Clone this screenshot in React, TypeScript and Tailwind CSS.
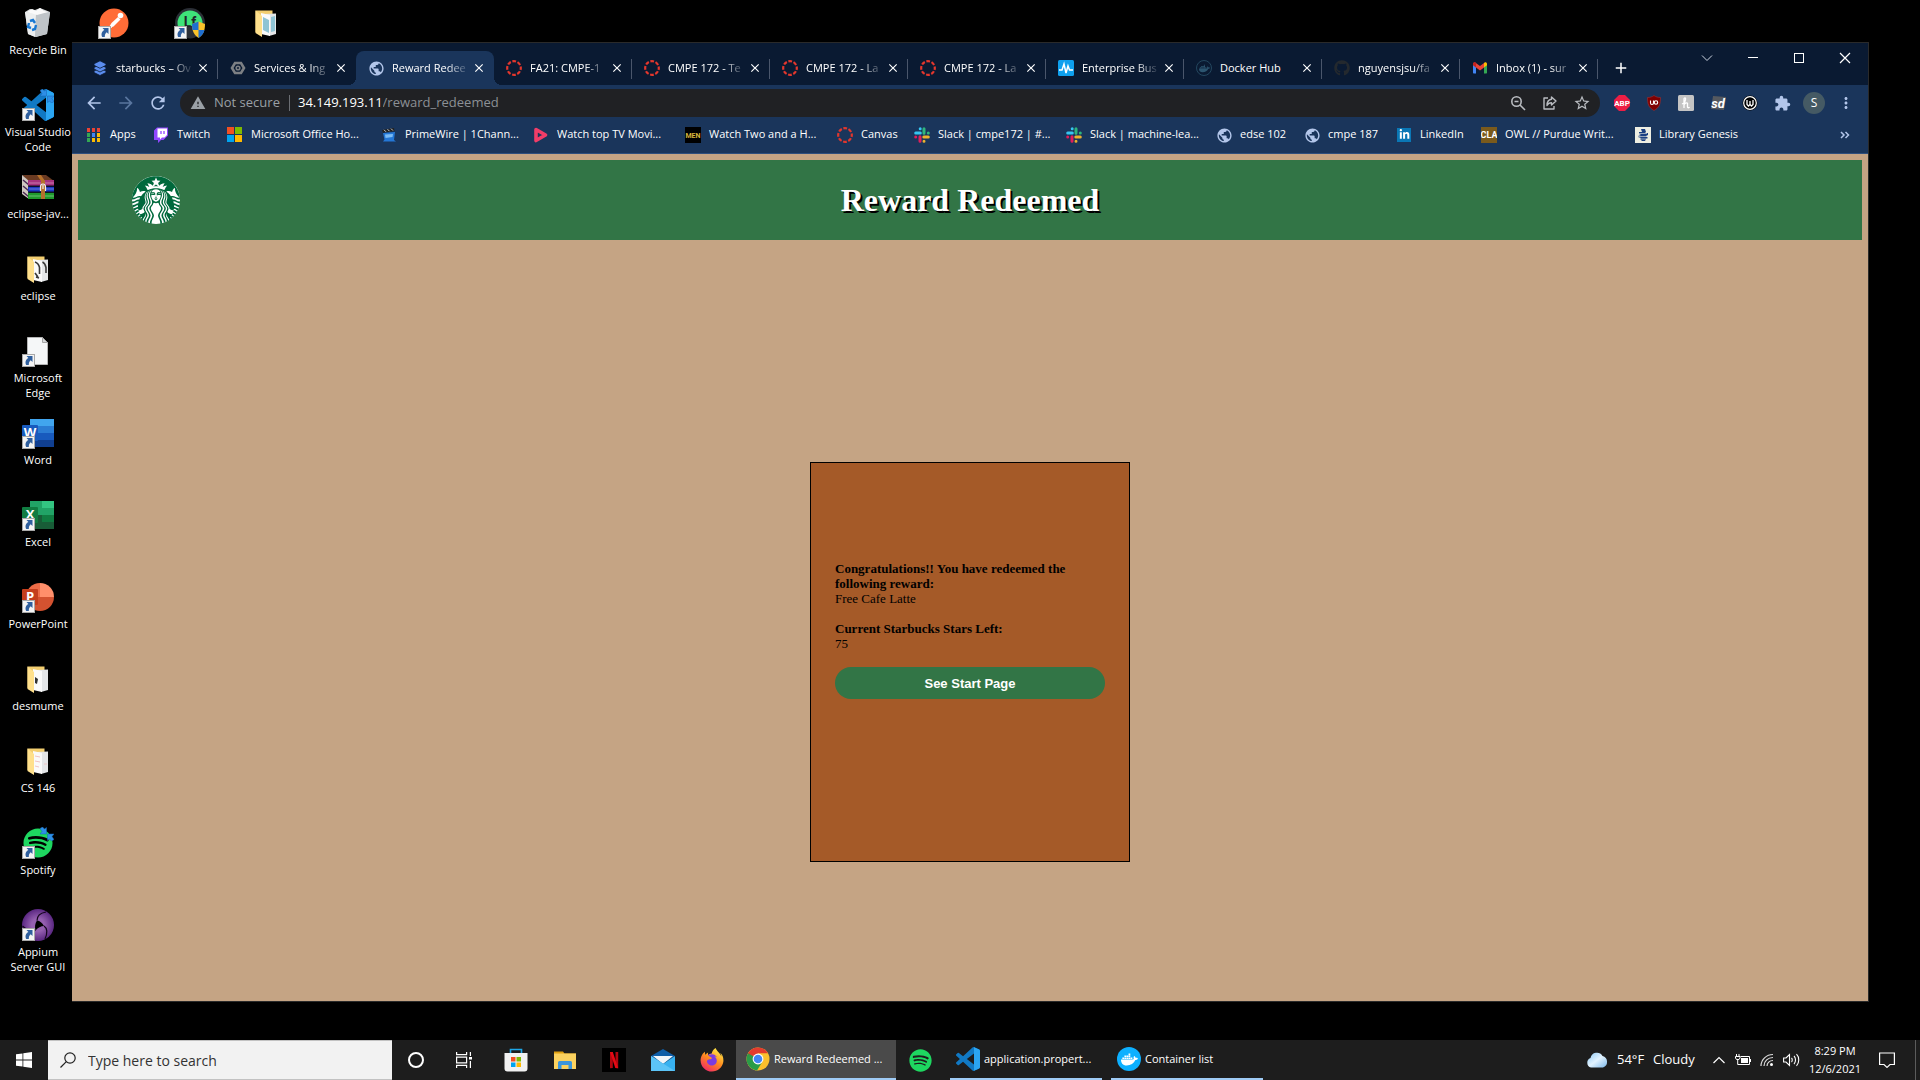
import type { ReactNode } from "react";
import { FaGithub, FaDocker, FaSpotify, FaLinkedinIn, FaFirefoxBrowser } from "react-icons/fa";
import {
  MdArrowBack,
  MdArrowForward,
  MdRefresh,
  MdWarning,
  MdExtension,
  MdMoreVert,
  MdPublic,
  MdStarBorder,
  MdClose,
  MdAdd,
} from "react-icons/md";
import { SiStarbucks } from "react-icons/si";

const VSCODE_PATH =
  "M23.15 2.587L18.21.21a1.494 1.494 0 0 0-1.705.29l-9.46 8.63-4.12-3.128a.999.999 0 0 0-1.276.057L.327 7.261A1 1 0 0 0 .326 8.74L3.899 12 .326 15.26a1 1 0 0 0 .001 1.479L1.65 17.94a.999.999 0 0 0 1.276.057l4.12-3.128 9.46 8.63a1.492 1.492 0 0 0 1.704.29l4.942-2.377A1.5 1.5 0 0 0 24 20.06V3.939a1.5 1.5 0 0 0-.85-1.352zm-5.146 14.861L10.826 12l7.178-5.448v10.896z";

/* ---------- desktop icons ---------- */

function ShortcutArrow() {
  return (
    <svg viewBox="0 0 13 13" className="absolute bottom-0 left-0 size-[13px]">
      <rect x="0.5" y="0.5" width="12" height="12" fill="#f4f4f4" stroke="#a8a8a8" />
      <path d="M4.500 2h6v6L8.700 6.200C7.200 7.400 6.800 8.800 6.800 11H4.200C2.800 8 3.800 5.400 6.400 4Z" fill="#2f5f9e" />
    </svg>
  );
}

function RecycleBin() {
  return (
    <svg viewBox="0 0 32 32" className="size-8">
      <path d="M3 5l5-3 5 1 5-2 5 2 5 2-3 22-11 3-8-3Z" fill="#d9dcde" />
      <path d="M3 5l11 2-1 23-7-3Z" fill="#eceeef" />
      <path d="M14 7l14-2-3 22-12 3Z" fill="#bfc4c8" />
      <path d="M5 5l5-3 4 2 4-3 4 3 4 1-11 3Z" fill="#fafafa" />
      <path d="M8 14l3-1 2 3M14 18l-1 4-3 1M9 21l-3-1 1-4" fill="none" stroke="#1677d2" strokeWidth="2.400" />
    </svg>
  );
}

function Postman() {
  return (
    <svg viewBox="0 -0.5 32 32" className="size-8">
      <circle cx="16" cy="15.500" r="14.500" fill="#ff6c37" />
      <circle cx="22.500" cy="8" r="2.800" fill="#fff" />
      <path d="M20 9.500l2.500 2.500-7 7-5 1.500 3-5Z" fill="#fff" />
      <path d="M10 21l-4 5M14 19l-3 4" stroke="#fff" strokeWidth="1" />
    </svg>
  );
}

function LfTool() {
  return (
    <svg viewBox="0 0 32 32" className="size-8">
      <circle cx="16" cy="16" r="15" fill="#2b2f36" />
      <circle cx="16" cy="16" r="12.500" fill="#3ee37a" />
      <path d="M3.500 19h25a12.500 12.500 0 0 1-25 0Z" fill="#2b2f36" />
      <text x="16" y="19.500" textAnchor="middle" fontSize="14" fontWeight="700" fontFamily="Roboto, sans-serif" fill="#20242a">
        Lf
      </text>
      <path d="M18 17l6.500-2.500 6.500 2.500c0 7-2 11-6.500 14C20 28 18 24 18 17Z" fill="#f9c22b" />
      <path d="M24.500 14.500V23H18.500c-.4-2-.5-4-.5-6ZM24.500 23h6c-1 4-3 6-6 8Z" fill="#1f6fd0" />
    </svg>
  );
}

function Folder({ sheet }: { sheet: "photo" | "dark" | "note" | "lined" }) {
  return (
    <svg viewBox="0 -1 32 32" className="size-8">
      <path d="M5.500 2.500h17V24H5.500Z" fill="#f3ce70" />
      <path d="M15 6l11-.500V26l-7 2Z" fill="#e4e6e8" />
      <path d="M11 5l9 2v21l-9-2Z" fill="#fafafa" />
      <path d="M5.500 2.500L12 8v21l-6.500-4Z" fill="#ffe08c" />
      {sheet === "photo" && <path d="M13 9l6 3v13l-6-3ZM21 9l4-1v15l-4 1Z" fill="#8fc4d4" />}
      {sheet === "dark" && (
        <path d="M13 8c3 1 4 3 4.500 5.500V20M20.500 8c2 1 3 3 3.500 5.500V19M13 19l3 4M14 23l3 1" fill="none" stroke="#3a3a3a" strokeWidth="1.600" />
      )}
      {sheet === "note" && <path d="M13 13l3 2-1 5-2-1Z" fill="#333" />}
      {sheet === "lined" && <path d="M13 10l5 1M13 15l5 1M13 20l4 1M22 18h3" stroke="#f0c4c4" strokeWidth="1" />}
    </svg>
  );
}

function VsCode({ className }: { className: string }) {
  return (
    <svg viewBox="0 0 24 24" className={className}>
      <path d={VSCODE_PATH} fill="#1179c4" />
      <path
        d="M18 .15c.2 0 .2 0 .3.100l4.850 2.337A1.500 1.500 0 0 1 24 3.939V20.060a1.500 1.500 0 0 1-.85 1.350l-5.150 2.400Z"
        fill="#2ba5f2"
      />
    </svg>
  );
}

function WinRar() {
  return (
    <svg viewBox="0 0 32 32" className="size-8">
      <path d="M0 4h24l8 6H6Z" fill="#6b3b22" />
      <path d="M0 4l7 6v18l-7-5Z" fill="#cfc7c0" />
      <path d="M1 9l6 5M1 15l6 5M1 21l6 5" stroke="#4b2a55" strokeWidth="1.500" />
      <rect x="6" y="9" width="26" height="6" fill="#a8327f" />
      <rect x="6" y="15.500" width="26" height="5.500" fill="#1c37c4" />
      <rect x="6" y="21.500" width="26" height="6.500" fill="#1f9a2c" />
      <path d="M7 12h25M7 18h25M7 25h25" stroke="#fff" strokeOpacity=".35" strokeWidth="1" />
      <path d="M6 15.200h26M6 21.200h26" stroke="#0c0c20" strokeWidth="1.200" />
      <path d="M15 4h4l4 6v18h-4V10Z" fill="#b5712c" />
      <path d="M18.500 20v-4.500a2.500 2.500 0 0 1 5 0V20M21 14v4" fill="none" stroke="#eee" strokeWidth="1.200" />
    </svg>
  );
}

function BlankPage() {
  return (
    <svg viewBox="0 0 32 32" className="size-8">
      <path d="M5.500 2.500h15l5 5v22h-20Z" fill="#f5f7f8" stroke="#b5b5b5" />
      <path d="M20.500 2.500v5h5Z" fill="#d5d8da" stroke="#a5a5a5" />
    </svg>
  );
}

function OfficeLetter({ letter, fill }: { letter: string; fill: string }) {
  return (
    <>
      <rect x="0" y="8" width="16" height="16" rx="1" fill={fill} />
      <text x="8" y="19.500" textAnchor="middle" fontSize="13" fontWeight="700" fontFamily="Open Sans, sans-serif" fill="#fff">
        {letter}
      </text>
    </>
  );
}

function Word() {
  return (
    <svg viewBox="0 0 32 32" className="size-8">
      <rect x="8" y="2" width="24" height="7" fill="#41a5ee" />
      <rect x="8" y="9" width="24" height="7" fill="#2b7cd3" />
      <rect x="8" y="16" width="24" height="7" fill="#185abd" />
      <rect x="8" y="23" width="24" height="7" fill="#103f91" />
      <OfficeLetter letter="W" fill="#185abd" />
    </svg>
  );
}

function Excel() {
  return (
    <svg viewBox="0 0 32 32" className="size-8">
      <rect x="8" y="2" width="12" height="14" fill="#21a366" />
      <rect x="20" y="2" width="12" height="7" fill="#33c481" />
      <rect x="20" y="9" width="12" height="7" fill="#21a366" />
      <rect x="8" y="16" width="24" height="7" fill="#107c41" />
      <rect x="8" y="16" width="12" height="14" fill="#185c37" />
      <rect x="20" y="23" width="12" height="7" fill="#185c37" />
      <OfficeLetter letter="X" fill="#107c41" />
    </svg>
  );
}

function PowerPoint() {
  return (
    <svg viewBox="0 0 32 32" className="size-8">
      <path d="M18 2a14 14 0 0 0-14 14h14Z" fill="#ed6c47" />
      <path d="M18 2a14 14 0 0 1 14 14H18Z" fill="#ff8f6b" />
      <path d="M4 16h28a14 14 0 0 1-28 0Z" fill="#d35230" />
      <OfficeLetter letter="P" fill="#c43e1c" />
    </svg>
  );
}

function SyncArrows() {
  return (
    <svg viewBox="0 0 14 14" className="absolute top-0 right-0 size-[14px]">
      <path d="M0 1.500L2.500 0l2 2L6.500.5V7H0L2 4.500ZM14 12.500L11.500 14l-2-2L7.500 13.500V7H14L12 9.500Z" fill="#2e8fe6" stroke="#1763b0" strokeWidth=".5" />
    </svg>
  );
}

function SpotifyDesktop() {
  return (
    <span className="grid size-8 place-items-center">
      <FaSpotify className="size-[30px] text-[#1ed760]" />
    </span>
  );
}

function Appium() {
  return (
    <svg viewBox="0 0 32 32" className="size-8">
      <defs>
        <radialGradient id="appium">
          <stop offset="0.4" stopColor="#9560b0" />
          <stop offset="1" stopColor="#5a2781" />
        </radialGradient>
      </defs>
      <circle cx="16" cy="16" r="16" fill="url(#appium)" />
      <path d="M15 11.500c3 .5 5 2 7 5.500-3 0-6 1.500-8.500 4.500-1-4-.5-7 1.500-10Z" fill="#000" />
      <path d="M15 11.500c0-4 3-7.500 9-8.500M22 17c3 2 4 6 1 13M13.500 21.500c-5 .5-9-.5-13-4.500" fill="none" stroke="#14061c" strokeWidth="1.200" />
    </svg>
  );
}

type DesktopItem = { label: string; icon: ReactNode; shortcut?: boolean; sync?: boolean };

const firstColumn: DesktopItem[] = [
  { label: "Recycle Bin", icon: <RecycleBin /> },
  { label: "Visual Studio Code", icon: <VsCode className="size-8" />, shortcut: true, sync: true },
  { label: "eclipse-jav...", icon: <WinRar /> },
  { label: "eclipse", icon: <Folder sheet="dark" /> },
  { label: "Microsoft Edge", icon: <BlankPage />, shortcut: true },
  { label: "Word", icon: <Word />, shortcut: true },
  { label: "Excel", icon: <Excel />, shortcut: true },
  { label: "PowerPoint", icon: <PowerPoint />, shortcut: true },
  { label: "desmume", icon: <Folder sheet="note" /> },
  { label: "CS 146", icon: <Folder sheet="lined" /> },
  { label: "Spotify", icon: <SpotifyDesktop />, shortcut: true, sync: true },
  { label: "Appium Server GUI", icon: <Appium />, shortcut: true },
];

const topRow: DesktopItem[] = [
  { label: "", icon: <Postman />, shortcut: true },
  { label: "", icon: <LfTool />, shortcut: true },
  { label: "", icon: <Folder sheet="photo" /> },
];

function DesktopIcon({ item }: { item: DesktopItem }) {
  return (
    <button className="flex h-[82px] w-[76px] flex-col items-center gap-[3px] px-0.5 text-[11px] leading-[15px] text-white">
      <span className="relative size-8">
        {item.icon}
        {item.sync && <SyncArrows />}
        {item.shortcut && <ShortcutArrow />}
      </span>
      {item.label}
    </button>
  );
}

/* ---------- favicons ---------- */

function Layers() {
  return (
    <svg viewBox="0 0 16 16" className="size-4" fill="#5b8def" stroke="#0a1a32" strokeWidth=".8">
      <path d="M8 8l6 3v1.500L8 15.500l-6-3V11Z" />
      <path d="M8 4.500l6 3V9l-6 3-6-3V7.500Z" />
      <path d="M8 .8l6 3v1.500l-6 3-6-3V3.800Z" />
    </svg>
  );
}

function Hexagon() {
  return (
    <svg viewBox="0 0 16 16" className="size-4" fill="none" stroke="#7d8084" strokeWidth="2.600">
      <path d="M5 3h6l3 5-3 5H5L2 8Z" />
      <circle cx="8" cy="8" r="1.800" strokeWidth="1.600" />
    </svg>
  );
}

function CanvasRing() {
  return (
    <svg viewBox="0 0 16 16" className="size-4">
      <circle cx="8" cy="8" r="6.800" fill="none" stroke="#e4372d" strokeWidth="2.200" strokeDasharray="3.740 1.600" strokeDashoffset="1.870" />
    </svg>
  );
}

function Pulse() {
  return (
    <svg viewBox="0 0 16 16" className="size-4">
      <rect width="16" height="16" rx="1.500" fill="#0ea0ee" />
      <path d="M1 10h3l2-6 2 9 2-7 1.500 4H15" fill="none" stroke="#fff" strokeWidth="1.500" />
    </svg>
  );
}

function DockerRing() {
  return (
    <span className="grid size-4 place-items-center rounded-full border border-[#23475f]">
      <FaDocker className="size-[11px] text-[#2c5570]" />
    </span>
  );
}

function Gmail() {
  return (
    <svg viewBox="0 0 16 16" className="size-4">
      <path d="M1 4v8.500c0 .6.400 1 1 1h2V7Z" fill="#4285f4" />
      <path d="M12 7v6.500h2c.6 0 1-.4 1-1V4Z" fill="#34a853" />
      <path d="M1 4.500V4c0-1.500 1.600-2 2.600-1.200L8 6l4.400-3.200L12 7.500 8 10.500 4 7.500Z" fill="#ea4335" />
      <path d="M1 3.800c0-1.300 1.500-2 2.600-1.200L4 3v4.500l-3-2.200Z" fill="#c5221f" />
      <path d="M12 3l.4-.3c1-.8 2.600-.2 2.600 1.300v1.300l-3 2.200Z" fill="#fbbc04" />
    </svg>
  );
}

function AppsGrid() {
  const colors = ["#ea4335", "#ea4335", "#ea4335", "#34a853", "#4285f4", "#fbbc04", "#34a853", "#fbbc04", "#fbbc04"];
  return (
    <svg viewBox="0 0 16 16" className="size-4">
      {colors.map((c, i) => (
        <rect key={i} x={1 + (i % 3) * 5} y={1 + Math.floor(i / 3) * 5} width="3" height="4" fill={c} />
      ))}
    </svg>
  );
}

function TwitchMark() {
  return (
    <svg viewBox="0 0 16 16" className="size-4">
      <path d="M1 3.500L4 .5h11v8L10.500 13H8l-3 3v-3H1Z" fill="#9146ff" />
      <path d="M4.500 1.500H14V8l-2.500 2.500H9L7 12.500v-2H4.500Z" fill="#fff" />
      <path d="M8 4v3M11 4v3" stroke="#9146ff" strokeWidth="1.300" />
    </svg>
  );
}

function FourSquares() {
  return (
    <svg viewBox="0 0 16 16" className="size-4">
      <rect width="7" height="7" fill="#f25022" />
      <rect x="8" width="7" height="7" fill="#7fba00" />
      <rect y="8" width="7" height="7" fill="#00a4ef" />
      <rect x="8" y="8" width="7" height="7" fill="#ffb900" />
    </svg>
  );
}

function Clapper() {
  return (
    <svg viewBox="0 0 16 16" className="size-4">
      <path d="M1 3l12-2 .5 3L2 6Z" fill="#222" />
      <path d="M3 2.800l2 2M6.500 2.200l2 2M10 1.600l2 2" stroke="#ccc" strokeWidth="1" />
      <path d="M2 6l12-1-1 8 2 1.500H2l1.500-2Z" fill="#2477d6" />
      <path d="M4 7.500l8-.5-.5 3L4.500 11Z" fill="#7cbcf5" />
    </svg>
  );
}

function PlayMark() {
  return (
    <svg viewBox="0 0 16 16" className="size-4">
      <path d="M3 2.500L12.500 8 3 13.500Z" fill="none" stroke="#f23d68" strokeWidth="3.600" strokeLinejoin="round" />
    </svg>
  );
}

function SquareText({ text, bg, fg, size }: { text: string; bg: string; fg: string; size: number }) {
  return (
    <svg viewBox="0 0 16 16" className="size-4">
      <rect width="16" height="16" fill={bg} />
      <text x="8" y={8 + size * 0.36} textAnchor="middle" fontSize={size} fontWeight={700} fontFamily="Roboto, sans-serif" fill={fg}>
        {text}
      </text>
    </svg>
  );
}

function Slack() {
  return (
    <svg viewBox="0 0 16 16" className="size-4" strokeWidth="3" strokeLinecap="round">
      <path d="M1.700 6h4.600M6.200 1.700v.1" stroke="#36c5f0" />
      <path d="M10 1.700v4.500M14.300 6h.01" stroke="#2eb67d" />
      <path d="M9.800 10h4.500M10 14.300v.01" stroke="#ecb22e" />
      <path d="M6 9.800v4.500M1.700 10h.01" stroke="#e01e5a" />
    </svg>
  );
}

function LinkedIn() {
  return (
    <span className="grid size-[14px] place-items-center bg-[#0a77b5]">
      <FaLinkedinIn className="size-[11px] text-white" />
    </span>
  );
}

function Genesis() {
  return (
    <svg viewBox="0 0 16 16" className="size-4">
      <rect width="16" height="16" fill="#eeeee2" />
      <path d="M6 2h4l1 3-1 1h3v2l-2 1 2 2-2 1-1 2H7l-2-2 1-1-3-1V9l3-1-2-1V5h3Z" fill="#1b3f82" />
      <path d="M4 6.500h8M3 9.500h9M5 12h7" stroke="#eeeee2" strokeWidth=".6" />
    </svg>
  );
}

function Globe() {
  return <MdPublic className="size-[17px] text-[#b3c6ea]" />;
}

/* ---------- browser chrome ---------- */

type Tab = { title: string; icon: ReactNode; active?: boolean; line?: boolean };

const tabs: Tab[] = [
  { title: "starbucks – Ov", icon: <Layers />, line: true },
  { title: "Services & Ing", icon: <Hexagon /> },
  { title: "Reward Redee", icon: <Globe />, active: true },
  { title: "FA21: CMPE-1", icon: <CanvasRing />, line: true },
  { title: "CMPE 172 - Te", icon: <CanvasRing />, line: true },
  { title: "CMPE 172 - La", icon: <CanvasRing />, line: true },
  { title: "CMPE 172 - La", icon: <CanvasRing />, line: true },
  { title: "Enterprise Bus", icon: <Pulse />, line: true },
  { title: "Docker Hub", icon: <DockerRing />, line: true },
  { title: "nguyensjsu/fa", icon: <FaGithub className="size-4 text-[#24292e]" />, line: true },
  { title: "Inbox (1) - sur", icon: <Gmail />, line: true },
];

function TabItem({ tab }: { tab: Tab }) {
  return (
    <div className={`relative flex w-[138px] items-center pr-[7px] pl-3 ${tab.active ? "rounded-t-lg bg-[#1a355b]" : ""}`}>
      {tab.active && (
        <>
          <span className="absolute bottom-0 -left-2 size-2 bg-[radial-gradient(circle_at_0_0,#0a1a32_8px,#1a355b_8px)]" />
          <span className="absolute -right-2 bottom-0 size-2 bg-[radial-gradient(circle_at_100%_0,#0a1a32_8px,#1a355b_8px)]" />
        </>
      )}
      <button className="flex min-w-0 flex-1 items-center gap-2">
        <span className="grid size-4 shrink-0 place-items-center">{tab.icon}</span>
        <span
          className={`w-[78px] text-left whitespace-nowrap ${
            tab.title === "Docker Hub" ? "" : "[mask-image:linear-gradient(to_right,black_70%,transparent)]"
          }`}
        >
          {tab.title}
        </span>
      </button>
      <button aria-label={`Close ${tab.title}`} className="grid size-4 shrink-0 place-items-center">
        <MdClose className="size-[14px]" />
      </button>
      {tab.line && <span className="absolute top-2 right-0 h-5 w-px bg-[#4a566b]" />}
    </div>
  );
}

function TabStrip() {
  return (
    <div className="flex h-[42px] bg-[#0a1a32] text-white">
      <div className="flex pt-2 pl-2 text-[11px]">
        {tabs.map((t, i) => (
          <TabItem key={i} tab={t} />
        ))}
        <button aria-label="New tab" className="ml-[11px] grid w-6 place-items-center">
          <MdAdd className="size-[18px]" />
        </button>
      </div>
      <div className="ml-auto flex h-[29px]">
        <button aria-label="Search tabs" className="grid w-[46px] place-items-center">
          <svg viewBox="0 0 12 12" className="size-3" fill="none" stroke="#cfd6e2">
            <path d="M1 3.500l5 5 5-5" />
          </svg>
        </button>
        <button aria-label="Minimize" className="grid w-[46px] place-items-center">
          <span className="h-px w-[10px] bg-white" />
        </button>
        <button aria-label="Maximize" className="grid w-[46px] place-items-center">
          <span className="size-[10px] border border-white" />
        </button>
        <button aria-label="Close" className="grid w-[46px] place-items-center">
          <svg viewBox="0 0 12 12" className="size-3" stroke="#fff" strokeWidth="1.200">
            <path d="M1 1l10 10M11 1L1 11" />
          </svg>
        </button>
      </div>
    </div>
  );
}

function ToolButton({ label, children }: { label: string; children: ReactNode }) {
  return (
    <button aria-label={label} className="grid w-8 place-items-center">
      {children}
    </button>
  );
}

function Toolbar() {
  return (
    <div className="flex h-9 items-center pr-1.5 pl-1.5 text-[#b3c6ea]">
      <ToolButton label="Back">
        <MdArrowBack className="size-5" />
      </ToolButton>
      <ToolButton label="Forward">
        <MdArrowForward className="size-5 text-[#5a769f]" />
      </ToolButton>
      <ToolButton label="Reload">
        <MdRefresh className="size-5" />
      </ToolButton>
      <div className="ml-1.5 flex h-7 flex-1 items-center rounded-full bg-[#202124] pl-2.5 text-[13px] text-[#9aa0a6]">
        <MdWarning className="size-4" />
        <span className="ml-2 w-[67px] whitespace-nowrap">Not secure</span>
        <span className="mx-2 h-4 w-px bg-[#6b6e73]" />
        <label htmlFor="address" className="text-white">
          34.149.193.11
        </label>
        <input id="address" defaultValue="/reward_redeemed" className="min-w-0 flex-1 bg-transparent text-[#8c9095] outline-none" />
        <ToolButton label="Zoom">
          <svg viewBox="0 0 16 16" className="size-4" fill="none" stroke="#b9bcc1" strokeWidth="1.600">
            <circle cx="6.500" cy="6.500" r="4.700" />
            <path d="M10 10l5 5M4.500 6.500h4" />
          </svg>
        </ToolButton>
        <ToolButton label="Share">
          <svg viewBox="0 0 16 16" className="size-4" fill="none" stroke="#b9bcc1" strokeWidth="1.400" strokeLinejoin="round">
            <path d="M6 3H2v11h10v-3" />
            <path d="M9.500 2L14 6l-4.500 4V7.700C7.500 7.700 6 8.500 5 10.500c0-3.500 1.800-5.800 4.500-6.200Z" />
          </svg>
        </ToolButton>
        <ToolButton label="Bookmark">
          <MdStarBorder className="size-[18px] text-[#b9bcc1]" />
        </ToolButton>
        <span className="w-0.5" />
      </div>
      <span className="w-1.5" />
      <ToolButton label="Adblock Plus">
        <svg viewBox="0 0 18 18" className="size-[18px]">
          <path d="M6 1h6l5 5v6l-5 5H6l-5-5V6Z" fill="#ed1e45" />
          <text x="9" y="12" textAnchor="middle" fontSize="8" fontWeight="700" fontFamily="Roboto, sans-serif" fill="#fff">
            ABP
          </text>
        </svg>
      </ToolButton>
      <ToolButton label="uBlock Origin">
        <svg viewBox="0 0 16 16" className="size-4">
          <path d="M8 .5c2 1.500 4 2 6.500 2 0 6.500-1 10-6.500 13C2.500 12.500 1.500 9 1.500 2.500 4 2.500 6 2 8 .5Z" fill="#800000" stroke="#a03030" strokeWidth=".6" />
          <path d="M4.500 5.500V8a1.500 1.500 0 0 0 3 0V5.500" fill="none" stroke="#fff" strokeWidth="1.100" />
          <circle cx="10" cy="7.500" r="1.700" fill="none" stroke="#fff" strokeWidth="1.100" />
        </svg>
      </ToolButton>
      <ToolButton label="Honey">
        <svg viewBox="0 0 16 16" className="size-4">
          <rect width="16" height="16" rx="1.500" fill="#c4c4c4" />
          <path d="M6 13V4c0-1.500 2-1.500 1.500.5L6 9.500C7.500 7.500 10 7 9.500 9.500V12c0 1 1.500 1 2 0M4 9l2-1" fill="none" stroke="#fff" strokeWidth="1.300" />
        </svg>
      </ToolButton>
      <ToolButton label="sd">
        <svg viewBox="0 0 16 16" className="size-4">
          <path d="M3 1l13 1-2 13-13-1Z" fill="#55595f" />
          <text x="8" y="12.500" textAnchor="middle" fontSize="13" fontWeight="700" fontStyle="italic" fontFamily="Roboto, sans-serif" fill="#fff">
            sd
          </text>
        </svg>
      </ToolButton>
      <ToolButton label="W">
        <svg viewBox="0 0 16 16" className="size-4">
          <circle cx="8" cy="8" r="7.500" fill="#000" />
          <circle cx="8" cy="8" r="6.300" fill="none" stroke="#fff" strokeWidth="1.200" />
          <path d="M5 5v4.500L6.500 11 8 9.500V6v3.500L9.500 11 11 9.500V5" fill="none" stroke="#fff" strokeWidth="1.300" />
        </svg>
      </ToolButton>
      <ToolButton label="Extensions">
        <MdExtension className="size-[17px]" />
      </ToolButton>
      <ToolButton label="Profile">
        <span className="grid size-[22px] place-items-center rounded-full bg-[#455a64] text-[12px] text-white">S</span>
      </ToolButton>
      <ToolButton label="Menu">
        <MdMoreVert className="size-[18px]" />
      </ToolButton>
    </div>
  );
}

const bookmarks: { label: string; icon: ReactNode; width: string }[] = [
  { label: "Apps", icon: <AppsGrid />, width: "w-[67px]" },
  { label: "Twitch", icon: <TwitchMark />, width: "w-[74px]" },
  { label: "Microsoft Office Ho...", icon: <FourSquares />, width: "w-[154px]" },
  { label: "PrimeWire | 1Chann...", icon: <Clapper />, width: "w-[152px]" },
  { label: "Watch top TV Movi...", icon: <PlayMark />, width: "w-[152px]" },
  { label: "Watch Two and a H...", icon: <SquareText text="MEN" bg="#000" fg="#d6b53c" size={7} />, width: "w-[152px]" },
  { label: "Canvas", icon: <CanvasRing />, width: "w-[77px]" },
  { label: "Slack | cmpe172 | #...", icon: <Slack />, width: "w-[152px]" },
  { label: "Slack | machine-lea...", icon: <Slack />, width: "w-[150px]" },
  { label: "edse 102", icon: <Globe />, width: "w-[88px]" },
  { label: "cmpe 187", icon: <Globe />, width: "w-[92px]" },
  { label: "LinkedIn", icon: <LinkedIn />, width: "w-[85px]" },
  { label: "OWL // Purdue Writ...", icon: <SquareText text="CLA" bg="#7a5a1c" fg="#fff" size={9} />, width: "w-[154px]" },
  { label: "Library Genesis", icon: <Genesis />, width: "w-[120px]" },
];

function BookmarksBar() {
  return (
    <nav className="flex h-[33px] items-center border-b border-[#2f4f7d] pb-[5px] pl-3.5 text-[11px] text-white">
      {bookmarks.map((b, i) => (
        <a key={i} href="#" className={`flex shrink-0 items-center gap-2 whitespace-nowrap ${b.width}`}>
          <span className="grid size-4 shrink-0 place-items-center">{b.icon}</span>
          {b.label}
        </a>
      ))}
      <button aria-label="More bookmarks" className="mr-[18px] ml-auto">
        <svg viewBox="0 0 10 8" className="h-2 w-[10px]" fill="none" stroke="#b3c6ea" strokeWidth="1.500">
          <path d="M1 1l3 3-3 3M5.500 1l3 3-3 3" />
        </svg>
      </button>
    </nav>
  );
}

function RewardPage() {
  return (
    <div className="flex min-h-0 flex-1 flex-col bg-[#c5a484] p-1.5 font-['Liberation_Serif',serif] text-black">
      <header className="grid h-20 shrink-0 grid-cols-[1fr_auto_1fr] items-center bg-[#327546] pl-[54px]">
        <span className="grid size-12 place-items-center rounded-full bg-white">
          <SiStarbucks className="size-12 text-[#00693c]" />
        </span>
        <h1 className="pr-[54px] text-[32px] font-bold text-white [text-shadow:2px_2px_#000]">Reward Redeemed</h1>
      </header>
      <main className="flex flex-1 items-center justify-center pt-[88px]">
        <section className="flex h-[400px] w-80 flex-col justify-center border border-black bg-[#a55a28] px-6 pb-[63px] text-[13px] leading-[15px]">
          <p className="font-bold">Congratulations!! You have redeemed the following reward:</p>
          <p>Free Cafe Latte</p>
          <p className="mt-[15px] font-bold">Current Starbucks Stars Left:</p>
          <p>75</p>
          <button className="mt-4 h-8 rounded-full bg-[#327546] font-['Liberation_Sans',sans-serif] text-[13px] font-bold text-white">
            See Start Page
          </button>
        </section>
      </main>
    </div>
  );
}

function BrowserWindow() {
  return (
    <div className="absolute top-[42px] right-[51px] bottom-[78px] left-[72px] flex flex-col border-t border-r border-b border-[#2a2a2a] bg-[#1a355b]">
      <TabStrip />
      <Toolbar />
      <BookmarksBar />
      <RewardPage />
    </div>
  );
}

/* ---------- taskbar ---------- */

function ChromeLogo() {
  return (
    <svg viewBox="0 0 24 24" className="size-6">
      <circle cx="12" cy="12" r="11.500" fill="#fbc02d" />
      <path d="M12 12L2 6.300A11.500 11.500 0 0 1 22 6.300H12Z" fill="#e33b2e" />
      <path d="M2 6.300A11.500 11.500 0 0 0 11 23.450L16.500 14.500 12 12Z" fill="#2a9c48" />
      <path d="M2 6.300L7.500 15 12 6.300Z" fill="#e33b2e" />
      <path d="M2 6.300l5.300 9L12 12Z" fill="#2a9c48" />
      <circle cx="12" cy="12" r="5.400" fill="#fff" />
      <circle cx="12" cy="12" r="4.300" fill="#4285f4" />
    </svg>
  );
}

function TaskIcon({ label, narrow, children }: { label: string; narrow?: boolean; children: ReactNode }) {
  return (
    <button aria-label={label} className={`grid h-10 place-items-center ${narrow ? "w-12" : "w-[49px]"}`}>
      {children}
    </button>
  );
}

function TaskWindow({ label, active, children }: { label: string; active?: boolean; children: ReactNode }) {
  return (
    <button
      className={`flex h-10 items-center gap-1 border-b-2 border-[#9fcbf5] text-[11px] whitespace-nowrap text-white ${
        active ? "w-[160px] bg-[#4a4a4a] pl-2.5" : "w-[152px] pl-1.5"
      }`}
    >
      {children}
      {label}
    </button>
  );
}

function Taskbar() {
  return (
    <footer className="absolute inset-x-0 bottom-0 flex h-10 items-center bg-[#1d1d1d] text-white">
      <button aria-label="Start" className="grid h-10 w-12 place-items-center">
        <svg viewBox="0 0 16 16" className="size-4" fill="#fff">
          <path d="M0 2.300L6.500 1.400V7.600H0ZM7.300 1.300L16 0V7.600H7.300ZM0 8.400H6.500V14.600L0 13.700ZM7.300 8.400H16V16L7.300 14.700Z" />
        </svg>
      </button>
      <label className="flex h-10 w-[344px] items-center gap-3 border-y border-[#c2c2c2] bg-[#f2f2f2] pl-3">
        <svg viewBox="0 0 16 16" className="size-4" fill="none" stroke="#222" strokeWidth="1.200">
          <circle cx="10" cy="6" r="5.200" />
          <path d="M6.300 9.700L.5 15.500" />
        </svg>
        <input
          placeholder="Type here to search"
          aria-label="Type here to search"
          className="w-60 bg-transparent text-[14px] text-black outline-none placeholder:text-[#333]"
        />
      </label>
      <TaskIcon label="Cortana" narrow>
        <span className="size-4 rounded-full border-2 border-white" />
      </TaskIcon>
      <TaskIcon label="Task view" narrow>
        <svg viewBox="0 0 16 16" className="size-4" fill="none" stroke="#fff" strokeWidth="1.200">
          <path d="M.6 0v2.600h10V0M.6 16v-2.600h10V16M.6 5.200h10v5.600H.6ZM14.400 0v4M14.400 9v7" />
          <rect x="13" y="5" width="3" height="2.500" fill="#fff" stroke="none" />
        </svg>
      </TaskIcon>
      <span className="w-[3px]" />
      <TaskIcon label="Store">
        <svg viewBox="0 0 24 24" className="size-6">
          <path d="M6.500 7V1.500h11V7" fill="none" stroke="#1ea7e8" strokeWidth="1.600" />
          <path d="M.5 5h23v15.500a3 3 0 0 1-3 3h-17a3 3 0 0 1-3-3Z" fill="#f1f1f1" />
          <rect x="7" y="9" width="4.500" height="4.500" fill="#f25022" />
          <rect x="12.500" y="9" width="4.500" height="4.500" fill="#7fba00" />
          <rect x="7" y="14.500" width="4.500" height="4.500" fill="#00a4ef" />
          <rect x="12.500" y="14.500" width="4.500" height="4.500" fill="#ffb900" />
        </svg>
      </TaskIcon>
      <TaskIcon label="File Explorer">
        <svg viewBox="0 0 24 24" className="size-6">
          <path d="M1 3.500h9l1.500 2H23V7H1Z" fill="#e0a010" />
          <rect x="1" y="5.500" width="22" height="15.500" fill="#fbd25f" />
          <path d="M5 21v-6.500a1.500 1.500 0 0 1 1.500-1.500h11a1.500 1.500 0 0 1 1.500 1.500V21h-3.500v-4h-7v4Z" fill="#3b96dd" />
        </svg>
      </TaskIcon>
      <TaskIcon label="Netflix">
        <svg viewBox="0 0 24 24" className="size-6">
          <rect width="24" height="24" fill="#000" />
          <path d="M8 4h2.800v16L8 20.300ZM13.500 4h2.700v16.300l-2.700-.3Z" fill="#b1060f" />
          <path d="M8 4h2.800l5.400 16.300-2.900-.4Z" fill="#e50914" />
        </svg>
      </TaskIcon>
      <TaskIcon label="Mail">
        <svg viewBox="0 0 24 24" className="size-6">
          <path d="M0 8l12-7 12 7-12 8Z" fill="#0f5ea8" />
          <path d="M2 8h20l-10 8Z" fill="#f2f6fa" />
          <path d="M0 8l12 8-12 7Z" fill="#2fa5e8" />
          <path d="M0 23V16l12 0 12-8v15Z" fill="#38b1f0" />
          <path d="M0 8l24 15H0Z" fill="#5cc4f7" />
        </svg>
      </TaskIcon>
      <TaskIcon label="Firefox">
        <svg width="0" height="0" className="absolute">
          <defs>
            <linearGradient id="fox" x1="0.8" y1="0" x2="0.2" y2="1">
              <stop offset="0" stopColor="#fff14a" />
              <stop offset="0.5" stopColor="#ff8a1e" />
              <stop offset="1" stopColor="#f0226b" />
            </linearGradient>
          </defs>
        </svg>
        <span className="grid size-6 place-items-center bg-[radial-gradient(circle,#7a3be0_6px,transparent_7px)]">
          <FaFirefoxBrowser className="size-6" fill="url(#fox)" />
        </span>
      </TaskIcon>
      <TaskWindow label="Reward Redeemed ..." active>
        <ChromeLogo />
      </TaskWindow>
      <TaskIcon label="Spotify">
        <FaSpotify className="size-[23px] text-[#1ed760]" />
      </TaskIcon>
      <span className="w-[5px]" />
      <TaskWindow label="application.propert...">
        <VsCode className="size-6" />
      </TaskWindow>
      <span className="w-[9px]" />
      <TaskWindow label="Container list">
        <span className="grid size-6 place-items-center rounded-full bg-[#0db0ff]">
          <FaDocker className="size-[17px] text-white" />
        </span>
      </TaskWindow>

      <div className="ml-auto flex h-10 items-center">
        <button className="flex items-center text-[13px] whitespace-nowrap">
          <svg viewBox="0 0 24 16" className="mr-2 h-4 w-6">
            <defs>
              <linearGradient id="cloud" x1="0" y1="0" x2="1" y2="1">
                <stop offset="0" stopColor="#8cc8f5" />
                <stop offset="0.5" stopColor="#e2f3ff" />
                <stop offset="1" stopColor="#7db8ea" />
              </linearGradient>
            </defs>
            <path d="M6 15.500a5 5 0 0 1-.5-9.500A6.500 6.500 0 0 1 17.500 4 6 6 0 0 1 18 15.500Z" fill="url(#cloud)" />
          </svg>
          <span className="w-9 text-left">54°F</span>
          <span className="w-[54px] text-left">Cloudy</span>
        </button>
        <button aria-label="Hidden icons" className="grid w-6 place-items-center">
          <svg viewBox="0 0 12 8" className="h-2 w-3" fill="none" stroke="#fff" strokeWidth="1.200">
            <path d="M.5 7L6 1.500 11.500 7" />
          </svg>
        </button>
        <button aria-label="Battery" className="grid w-6 place-items-center">
          <svg viewBox="0 0 16 12" className="h-3 w-4" fill="none" stroke="#fff">
            <path d="M5.500 2.500h9v8h-10M15.500 5v3" />
            <rect x="6" y="4" width="7" height="5" fill="#fff" stroke="none" />
            <path d="M1.500 0v2M4 0v2M.5 2.500h4.500v1.500l-1 1.500h-2.500l-1-1.500ZM2.700 5.500v5h2.500" />
          </svg>
        </button>
        <button aria-label="Network" className="grid w-6 place-items-center">
          <svg viewBox="0 0 14 14" className="size-[14px]" fill="none" stroke="#ddd" strokeWidth="1.200">
            <path d="M1 13C1 6.500 6.500 1.500 13 1.500M4 13c0-5 4-8.500 9-8.500M7 13c0-3 2.500-5.500 6-5.500" />
            <circle cx="11.500" cy="11.500" r="1.500" fill="#fff" stroke="none" />
          </svg>
        </button>
        <button aria-label="Volume" className="grid w-6 place-items-center">
          <svg viewBox="0 0 17 14" className="h-[14px] w-[17px]" fill="none" stroke="#fff" strokeWidth="1.100">
            <path d="M.6 5h2.400l3.500-3.500v11L3 9H.6ZM8.500 5c1 1 1 3 0 4M11 3c2 2 2 6 0 8M13.500 1.200c3 3 3 8.600 0 11.600" />
          </svg>
        </button>
        <button className="w-16 text-center text-[11px] leading-[18px]">
          8:29 PM
          <br />
          12/6/2021
        </button>
        <button aria-label="Notifications" className="mr-2 grid w-10 place-items-center">
          <svg viewBox="0 0 16 16" className="size-4" fill="none" stroke="#fff" strokeWidth="1.200">
            <path d="M.6 1h14.800v11.500H11L8 15.400 5 12.500H.6Z" />
          </svg>
        </button>
        <button aria-label="Show desktop" className="h-10 w-[5px] border-l border-[#5c5c5c]" />
      </div>
    </footer>
  );
}

export default function App() {
  return (
    <div className="relative h-screen overflow-hidden bg-black font-['Open_Sans','Noto_Sans',sans-serif]">
      <div className="flex items-start pt-[7px]">
        <div className="flex flex-col">
          {firstColumn.map((d) => (
            <DesktopIcon key={d.label} item={d} />
          ))}
        </div>
        {topRow.map((d, i) => (
          <DesktopIcon key={i} item={d} />
        ))}
      </div>
      <BrowserWindow />
      <Taskbar />
    </div>
  );
}
